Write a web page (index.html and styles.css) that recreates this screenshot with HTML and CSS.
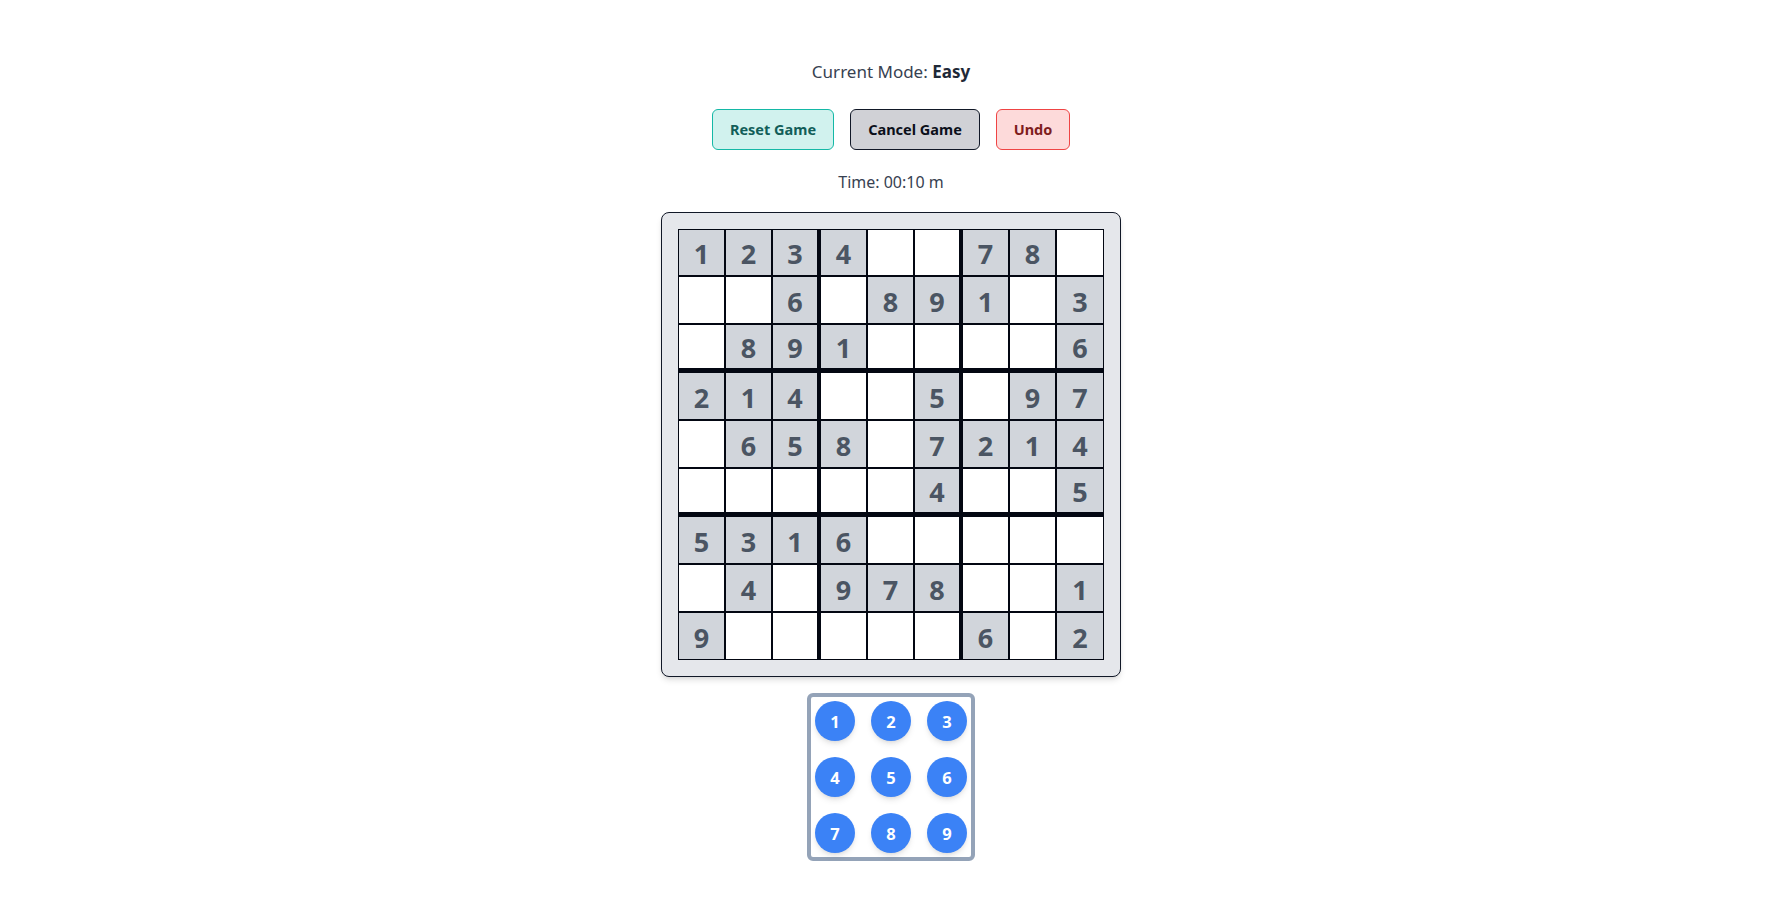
FILE: index.html
```html
<!DOCTYPE html>
<html lang="en">
<head>
<meta charset="utf-8">
<title>Sudoku</title>
<link rel="stylesheet" href="styles.css">
</head>
<body>
<main class="app">
  <p class="mode">Current Mode: <strong>Easy</strong></p>
  <div class="actions">
    <button class="btn btn-reset">Reset Game</button>
    <button class="btn btn-cancel">Cancel Game</button>
    <button class="btn btn-undo">Undo</button>
  </div>
  <p class="timer">Time: 00:10 m</p>
  <div class="board">
    <div class="grid">
      <div class="cell given">1</div><div class="cell given">2</div><div class="cell given c3">3</div><div class="cell given">4</div><div class="cell"></div><div class="cell c6"></div><div class="cell given">7</div><div class="cell given">8</div><div class="cell"></div>
      <div class="cell"></div><div class="cell"></div><div class="cell given c3">6</div><div class="cell"></div><div class="cell given">8</div><div class="cell given c6">9</div><div class="cell given">1</div><div class="cell"></div><div class="cell given">3</div>
      <div class="cell r3"></div><div class="cell given r3">8</div><div class="cell given c3 r3">9</div><div class="cell given r3">1</div><div class="cell r3"></div><div class="cell c6 r3"></div><div class="cell r3"></div><div class="cell r3"></div><div class="cell given r3">6</div>
      <div class="cell given">2</div><div class="cell given">1</div><div class="cell given c3">4</div><div class="cell"></div><div class="cell"></div><div class="cell given c6">5</div><div class="cell"></div><div class="cell given">9</div><div class="cell given">7</div>
      <div class="cell"></div><div class="cell given">6</div><div class="cell given c3">5</div><div class="cell given">8</div><div class="cell"></div><div class="cell given c6">7</div><div class="cell given">2</div><div class="cell given">1</div><div class="cell given">4</div>
      <div class="cell r3"></div><div class="cell r3"></div><div class="cell c3 r3"></div><div class="cell r3"></div><div class="cell r3"></div><div class="cell given c6 r3">4</div><div class="cell r3"></div><div class="cell r3"></div><div class="cell given r3">5</div>
      <div class="cell given">5</div><div class="cell given">3</div><div class="cell given c3">1</div><div class="cell given">6</div><div class="cell"></div><div class="cell c6"></div><div class="cell"></div><div class="cell"></div><div class="cell"></div>
      <div class="cell"></div><div class="cell given">4</div><div class="cell c3"></div><div class="cell given">9</div><div class="cell given">7</div><div class="cell given c6">8</div><div class="cell"></div><div class="cell"></div><div class="cell given">1</div>
      <div class="cell given">9</div><div class="cell"></div><div class="cell c3"></div><div class="cell"></div><div class="cell"></div><div class="cell c6"></div><div class="cell given">6</div><div class="cell"></div><div class="cell given">2</div>
    </div>
  </div>
  <div class="numpad">
    <button class="num">1</button><button class="num">2</button><button class="num">3</button>
    <button class="num">4</button><button class="num">5</button><button class="num">6</button>
    <button class="num">7</button><button class="num">8</button><button class="num">9</button>
  </div>
</main>
</body>
</html>
```
FILE: styles.css
```css
* { box-sizing: border-box; }
html, body { margin: 0; padding: 0; background: #ffffff; }
body {
  font-family: "Segoe UI", "Noto Sans", "Open Sans", sans-serif;
  color: #374151;
}
.app {
  display: flex;
  flex-direction: column;
  align-items: center;
  padding: 58px 0 0 7px;
}
.mode {
  margin: 0;
  font-size: 17px;
  line-height: 28px;
  color: #374151;
}
.mode strong { color: #1f2937; font-weight: 700; }
.actions {
  display: flex;
  gap: 16px;
  margin-top: 23px;
}
.btn {
  font-family: inherit;
  font-size: 14.5px;
  font-weight: 700;
  line-height: 23px;
  padding: 8px 0;
  border: 1px solid;
  border-radius: 6px;
  cursor: pointer;
  height: 41px;
}
.btn-reset { width: 122px; background: #d1f2ee; border-color: #14b8a6; color: #115e59; }
.btn-cancel { width: 130px; background: #d0d1d6; border-color: #111827; color: #0b0f1a; }
.btn-undo { width: 74px; background: #fddada; border-color: #ef4444; color: #7f1d1d; }
.timer {
  margin: 20px 0 0;
  font-size: 16px;
  line-height: 24px;
  color: #374151;
}
.board {
  margin-top: 18px;
  padding: 16px;
  background: #e5e7eb;
  border: 1px solid #111827;
  border-radius: 8px;
  box-shadow: 0 4px 6px -1px rgba(0,0,0,0.12), 0 2px 4px -2px rgba(0,0,0,0.1);
}
.grid {
  display: grid;
  grid-template-columns: 47px 47px 48px 47px 47px 48px 47px 47px 48px;
  grid-template-rows: 47px 48px 48px 48px 48px 48px 48px 48px 48px;
}
.cell {
  border: 1px solid #030712;
  background: #ffffff;
  display: flex;
  align-items: center;
  justify-content: center;
  font-size: 27px;
  font-weight: 700;
  color: #4b5563;
  line-height: 1;
  padding-top: 2px;
}
.cell.given { background: #d1d5db; }
.cell.c3, .cell.c6 { border-right-width: 3px; }
.cell.r3 { border-bottom-width: 4px; }
.numpad {
  margin-top: 16px;
  border: 4px solid #94a3b8;
  border-radius: 6px;
  padding: 4px;
  display: grid;
  grid-template-columns: repeat(3, 40px);
  gap: 16px;
  background: #ffffff;
}
.num {
  width: 40px;
  height: 40px;
  border-radius: 50%;
  border: none;
  background: #3b82f6;
  color: #ffffff;
  font-family: inherit;
  font-size: 16.5px;
  font-weight: 700;
  padding: 0;
  box-shadow: 0 4px 6px -1px rgba(0,0,0,0.1), 0 2px 4px -2px rgba(0,0,0,0.1);
  cursor: pointer;
}
```
